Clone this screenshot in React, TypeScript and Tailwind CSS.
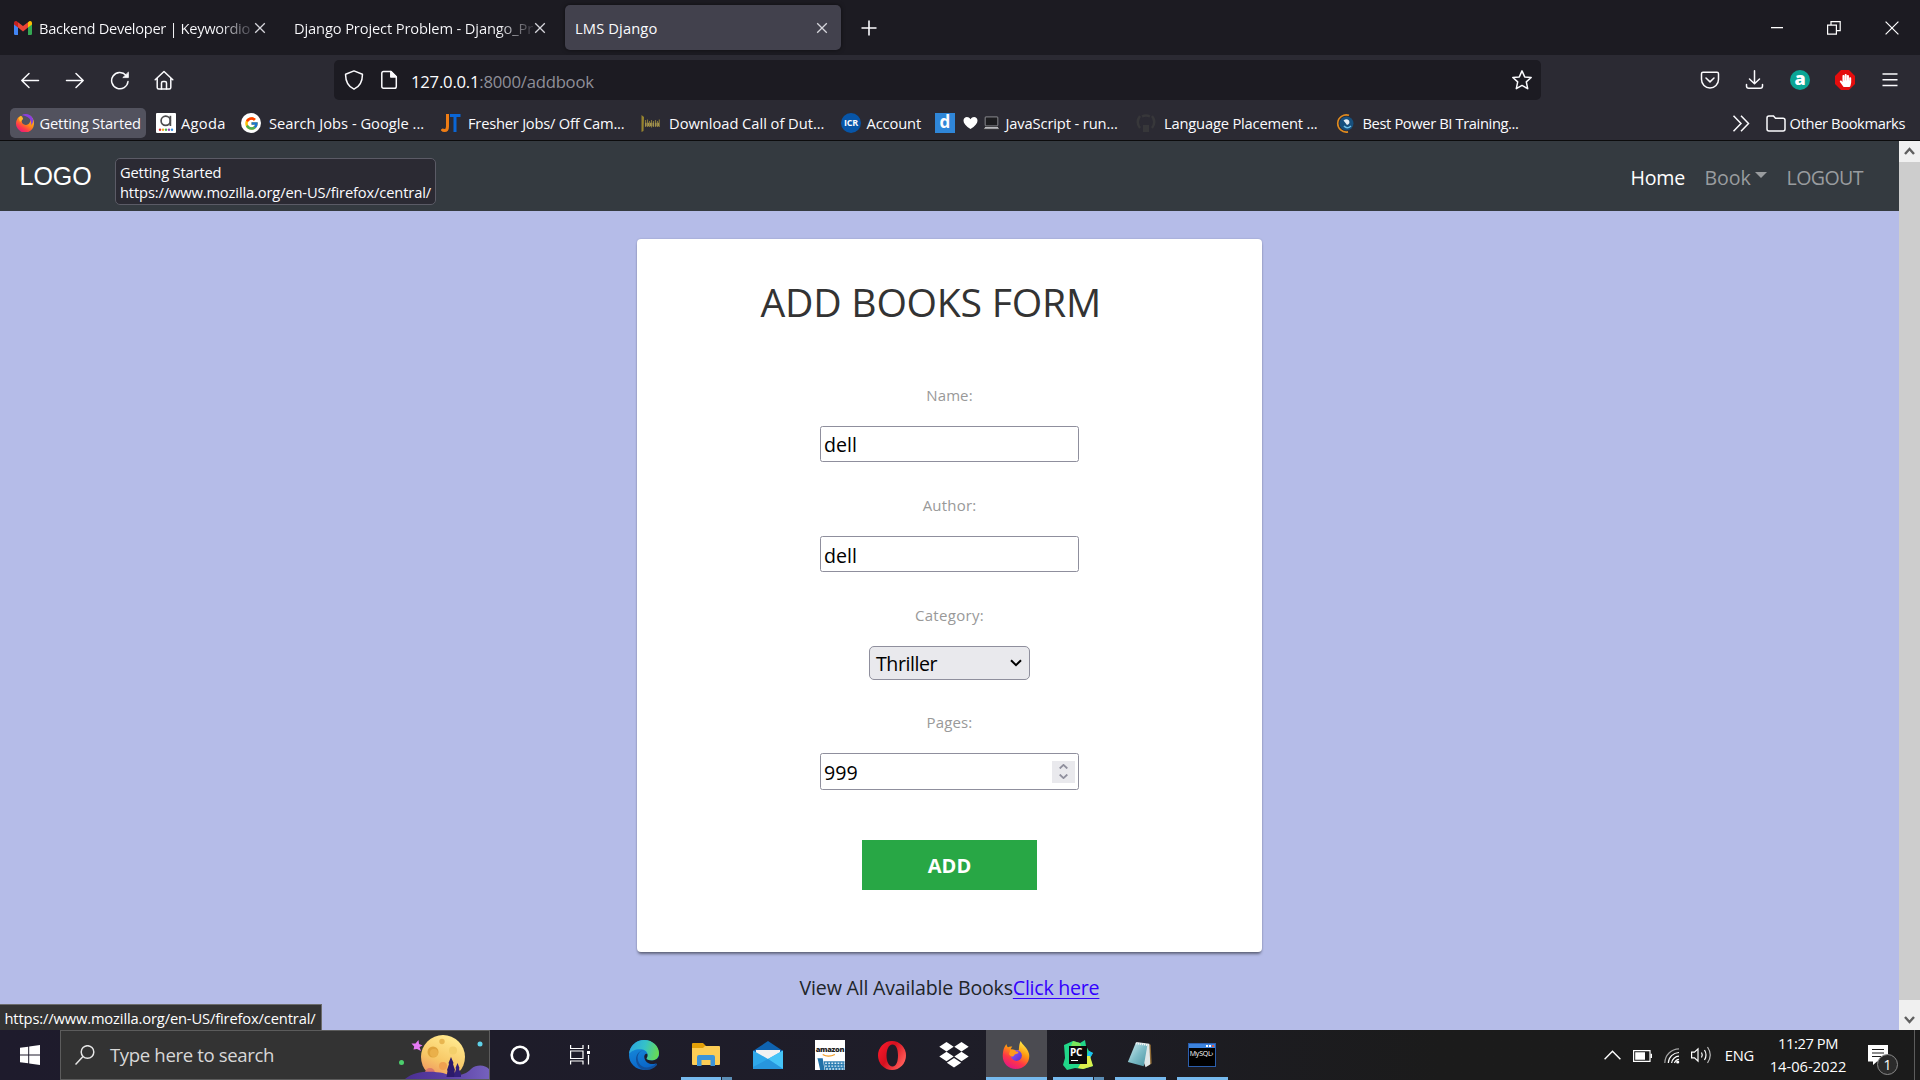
import type { ReactNode } from "react";
import { FcGoogle } from "react-icons/fc";
import { FaHandPaper } from "react-icons/fa";

function CloseIcon() {
  return (
    <svg width="12" height="12" viewBox="0 0 12 12" fill="none" stroke="#d6d6dc" strokeWidth="1.3" className="shrink-0">
      <path d="M1.2 1.2 10.8 10.8M10.8 1.2 1.2 10.8" />
    </svg>
  );
}

function GmailIcon() {
  return (
    <svg width="18" height="14" viewBox="0 0 18 14" className="shrink-0">
      <path d="M0 2.4V12.8Q0 14 1.2 14H4V5Z" fill="#4285f4" />
      <path d="M18 2.4V12.8Q18 14 16.8 14H14V5Z" fill="#34a853" />
      <path d="M4 1.2V6.5L9 10.4 14 6.5V1.2L9 5Z" fill="#ea4335" />
      <path d="M0 2V3.4L4 6.5V1.2L3 .5C1.6-.5 0 .4 0 2Z" fill="#c5221f" />
      <path d="M18 2V3.4L14 6.5V1.2L15 .5C16.4-.5 18 .4 18 2Z" fill="#fbbc04" />
    </svg>
  );
}

function TabBar() {
  return (
    <div className="flex h-[55px] items-center bg-[#1c1b22] text-[14.7px] text-[#fbfbfe]">
      <div className="flex h-[45px] w-[279px] items-center pl-3.5">
        <GmailIcon />
        <span className="ml-[7px] mt-[1.5px] w-[211px] overflow-hidden whitespace-nowrap bg-gradient-to-r from-[#fbfbfe] from-85% to-[#4a4952] bg-clip-text tracking-[-0.34px] text-transparent">
          Backend Developer | Keywordio
        </span>
        <span className="ml-[3.5px]"><CloseIcon /></span>
      </div>
      <div className="flex h-[45px] w-[286px] items-center pl-[15px]">
        <span className="mt-[1.5px] w-[240px] overflow-hidden whitespace-nowrap bg-gradient-to-r from-[#fbfbfe] from-85% to-[#33323a] bg-clip-text tracking-[-0.145px] text-transparent">
          Django Project Problem - Django_Pr
        </span>
        <CloseIcon />
      </div>
      <div className="flex h-[45px] w-[276px] items-center justify-between rounded-[5px] bg-[#42414d] pl-[10px] pr-[13.5px] shadow-[0_0_4px_rgba(0,0,0,0.5)]">
        <span className="mt-[1.5px] tracking-[0.13px]">LMS Django</span>
        <CloseIcon />
      </div>
      <svg width="16" height="16" viewBox="0 0 16 16" className="ml-[19.5px] shrink-0" stroke="#fbfbfe" strokeWidth="1.6">
        <path d="M8 .5v15M.5 8h15" />
      </svg>
      <div className="ml-auto flex items-center pr-[21.5px]">
        <svg width="13" height="13" viewBox="0 0 13 13"><path d="M0 6h12v1.3H0z" fill="#fff" /></svg>
        <svg width="14" height="14" viewBox="0 0 14 14" className="ml-[43px]" fill="none" stroke="#fff" strokeWidth="1.2">
          <path d="M.6 4.2h8.8v9H.6zM4 4V.6h9.2v9H9.6" />
        </svg>
        <svg width="14" height="14" viewBox="0 0 14 14" className="ml-[43.5px]" fill="none" stroke="#fff" strokeWidth="1.2">
          <path d="M.6.6 13.4 13.4M13.4.6.6 13.4" />
        </svg>
      </div>
    </div>
  );
}

function NavIcon({ children, className }: { children: ReactNode; className?: string }) {
  return (
    <svg
      width="20"
      height="20"
      viewBox="0 0 20 20"
      fill="none"
      stroke="#fbfbfe"
      strokeWidth="1.5"
      strokeLinecap="round"
      strokeLinejoin="round"
      className={"shrink-0 " + (className ?? "")}
    >
      {children}
    </svg>
  );
}

function Toolbar() {
  return (
    <div className="flex h-[50px] items-center">
      <div className="flex w-[334px] items-center gap-[25px] pl-5">
        <NavIcon><path d="M18.5 10.5H1.8M9 3.5 1.8 10.5 9 17.5" /></NavIcon>
        <NavIcon><path d="M1.5 10.5H18.2M11 3.5 18.2 10.5 11 17.5" /></NavIcon>
        <NavIcon>
          <path d="M18 11.5A8.2 8.2 0 1 1 16 5.2" />
          <path d="M18.4 2.5V7.6H13.2Z" fill="#fbfbfe" strokeWidth=".8" />
        </NavIcon>
        <NavIcon className="-ml-px">
          <path d="M1.2 9.8 10 1.5l8.8 8.3M3.2 8.5V17.5Q3.2 19 4.7 19H15.3Q16.8 19 16.8 17.5V8.5" />
          <path d="M7.5 19v-6q0-1.500 1.500-1.500h2q1.500 0 1.500 1.500v6" />
        </NavIcon>
      </div>
      <div className="flex h-10 w-[1207px] items-center rounded-[5px] bg-[#1c1b22] pl-2.5">
        <NavIcon>
          <path d="M10 .9 18.4 4.2C18.6 11.5 15.5 16.5 10 19.2 4.5 16.5 1.4 11.5 1.6 4.2Z" />
        </NavIcon>
        <NavIcon className="ml-[15px]">
          <path d="M4.5 1.5H12L17.3 6.8V16.5Q17.3 18.3 15.5 18.3H4.5Q2.8 18.3 2.8 16.5V3.2Q2.8 1.5 4.5 1.5Z" />
          <path d="M11.8 1.5V7H17.3Z" fill="#fbfbfe" />
        </NavIcon>
        <span className="ml-3 mt-[2.5px] text-[16.7px] tracking-[-0.23px] text-[#8f8f98]">
          <span className="text-[#fbfbfe]">127.0.0.1</span>:8000/addbook
        </span>
        <NavIcon className="ml-auto mr-[9px]">
          <path d="M10 .9 12.7 6.9 19.2 7.5 14.3 11.9 15.7 18.7 10 15.4 4.3 18.7 5.7 11.9.8 7.5 7.3 6.9Z" />
        </NavIcon>
      </div>
      <div className="ml-auto flex items-center gap-[25px] pr-5">
        <NavIcon>
          <path d="M3 2.3H17Q18.5 2.3 18.5 3.8V9.5A8.5 8.5 0 0 1 1.5 9.5V3.8Q1.5 2.3 3 2.3Z" />
          <path d="M6 8 10 11.9 14 8" />
        </NavIcon>
        <NavIcon>
          <path d="M9.5.8V13.5M4.5 9 9.5 13.8 14.5 9M1.5 14.5V16Q1.5 18.3 3.8 18.3H15.2Q17.5 18.3 17.5 16V14.5" />
        </NavIcon>
        <div className="flex size-5 items-center justify-center rounded-full bg-[#0aa595]">
          <span className="-mt-1 text-[18px] font-extrabold leading-5 text-white">a</span>
        </div>
        <div className="flex size-5 items-center justify-center bg-[#e40d0d] [clip-path:polygon(30%_0,70%_0,100%_30%,100%_70%,70%_100%,30%_100%,0_70%,0_30%)]">
          <FaHandPaper size={13} color="#fff" />
        </div>
        <NavIcon><path d="M2.5 4H17.5M2.5 9.7H17.5M2.5 15.5H17.5" strokeLinecap="butt" /></NavIcon>
      </div>
    </div>
  );
}

function FirefoxMark({ size, id }: { size: number; id: string }) {
  return (
    <svg width={size} height={size} viewBox="0 0 30 30" className="shrink-0">
      <defs>
        <linearGradient id={id + "a"} x1=".8" y1="0" x2=".3" y2="1">
          <stop offset="0" stopColor="#fff44f" />
          <stop offset=".4" stopColor="#ff980e" />
          <stop offset=".7" stopColor="#ff3647" />
          <stop offset="1" stopColor="#e31587" />
        </linearGradient>
        <linearGradient id={id + "b"} x1="0" y1="0" x2="1" y2="1">
          <stop offset="0" stopColor="#9059ff" />
          <stop offset="1" stopColor="#5b2fc7" />
        </linearGradient>
      </defs>
      <path
        d="M2 8C3 6 4 4 5 3.5 5 5 5.5 6 6.5 6.8 8 6 9.5 5.8 11 6.2 9.8 7.2 9.5 8.3 9.5 9L18 10C18.5 5 18.5 3 20 0 21.5 4 27.5 7 29 14 30.500 22.5 24 30 15 30 6.5 30 .5 23.5 .8 15.5 .9 12.5 1.3 10.2 2 8Z"
        fill={"url(#" + id + "a)"}
      />
      <circle cx="15.5" cy="15.5" r="5.8" fill={"url(#" + id + "b)"} />
      <path d="M9 9.5C12 8.5 14 9.500 15 11.3 17 11.4 17.8 12 17.5 12.8 16.5 14 13.5 13.5 12.5 16 10.5 17.5 8.5 16 7.5 14Z" fill="#ff9b1c" />
    </svg>
  );
}

function FirefoxRing() {
  return (
    <svg width="18" height="18" viewBox="0 0 18 18" className="shrink-0">
      <defs>
        <linearGradient id="ring" x1=".9" y1=".1" x2=".3" y2="1">
          <stop offset="0" stopColor="#ffbd30" />
          <stop offset=".45" stopColor="#ff8a16" />
          <stop offset=".75" stopColor="#ff3b4a" />
          <stop offset="1" stopColor="#e6197f" />
        </linearGradient>
      </defs>
      <path d="M4.5 1.8A9 9 0 1 0 18 9C18 6 16.5 3 14 1.4 15.5 5 14.5 10.5 10 11 6 11.2 4.5 7 7 4.5Z" fill="url(#ring)" />
      <path d="M5.5 1.2C9-.8 15-.3 17 5 17.5 8 16.5 10 15 11 16 6 13 2 5.5 1.2Z" fill="#8a3fe0" />
      <path d="M2.5 4C3.5 2.5 5 2 6 2.2L7 5 4 8Z" fill="#ffb52e" />
    </svg>
  );
}

function AgodaIcon() {
  return (
    <svg width="20" height="20" viewBox="0 0 20 20" className="shrink-0">
      <rect width="20" height="20" rx="1" fill="#fff" />
      <circle cx="9.7" cy="7.8" r="4.6" fill="none" stroke="#4d4d4f" strokeWidth="1.7" />
      <path d="M14.4 2.8V13" stroke="#4d4d4f" strokeWidth="1.7" />
      <circle cx="4" cy="16.8" r="1.2" fill="#e12d2d" />
      <circle cx="7" cy="16.8" r="1.2" fill="#f5a623" />
      <circle cx="10" cy="16.8" r="1.2" fill="#4fb548" />
      <circle cx="13" cy="16.8" r="1.2" fill="#9a3fb5" />
      <circle cx="16" cy="16.8" r="1.2" fill="#2f8fe0" />
    </svg>
  );
}

function JtIcon() {
  return (
    <svg width="20" height="20" viewBox="0 0 20 20" fill="none" className="shrink-0">
      <path d="M6.5 1V13.5Q6.5 17.5 3.5 17.5 1.8 17.5.8 16" stroke="#ef7d14" strokeWidth="3" />
      <path d="M9 2.5H19.5M14 2V19" stroke="#0a66d6" strokeWidth="3" />
    </svg>
  );
}

function GameIcon() {
  return (
    <svg width="19" height="20" viewBox="0 0 19 20" className="shrink-0">
      <path d="M.5 2 3 4 2.5 18 .5 19Z" fill="#97842f" />
      <path d="M4.5 7V14M6.500 6.5V14M8.500 8V14M10.500 7V14.5M12.500 8V14M14.500 7V14M16.500 8V14M18.300 6.5V14" stroke="#85763a" strokeWidth="1.1" />
      <path d="M4 11.5H18" stroke="#a39350" strokeWidth="3.500" strokeDasharray="1.600 .9" />
    </svg>
  );
}

function LaptopIcon() {
  return (
    <svg width="17" height="14" viewBox="0 0 17 14" className="shrink-0">
      <rect x="2.2" y=".8" width="12.6" height="9" rx="1" fill="#1d1d20" stroke="#77777c" strokeWidth="1.2" />
      <path d="M.3 13.2 2.2 10.4H14.8L16.7 13.2Z" fill="#b9b9bd" stroke="#111" strokeWidth=".6" />
    </svg>
  );
}

function GlobeIcon() {
  return (
    <svg width="19" height="19" viewBox="0 0 19 19" fill="none" className="shrink-0">
      <circle cx="10.5" cy="9.5" r="7" fill="#17507e" />
      <path d="M7.5 6.5Q10.5 4 13 6.5 14.5 9.500 11 11L9.500 9Z" fill="#e6eef5" />
      <path d="M8 12Q11 15.5 15 12" stroke="#6fc0ea" strokeWidth="1.5" />
      <path d="M13 1.3A8.6 8.6 0 1 0 12 17.9" stroke="#e08a1e" strokeWidth="1.6" />
    </svg>
  );
}

function BookmarksBar() {
  return (
    <div className="flex h-[35px] items-start whitespace-nowrap pl-2.5 pt-[3px] text-[14.7px] text-[#fbfbfe]">
      <div className="mr-2.5 flex h-[30px] w-[136px] items-center rounded-[5px] bg-[#52525e] pl-1.5">
        <FirefoxRing />
        <span className="ml-[5.5px] tracking-[-0.16px]">Getting Started</span>
      </div>
      <div className="flex h-[30px] w-[85px] items-center">
        <AgodaIcon />
        <span className="ml-[5px] tracking-[0.3px]">Agoda</span>
      </div>
      <div className="flex h-[30px] w-[200px] items-center">
        <span className="flex size-5 items-center justify-center rounded-full bg-white"><FcGoogle size={15} /></span>
        <span className="ml-[8px]">Search Jobs - Google ...</span>
      </div>
      <div className="flex h-[30px] w-[200px] items-center">
        <JtIcon />
        <span className="ml-[7px] tracking-[-0.22px]">Fresher Jobs/ Off Cam...</span>
      </div>
      <div className="flex h-[30px] w-[200px] items-center">
        <GameIcon />
        <span className="ml-[9px] tracking-[-0.03px]">Download Call of Dut...</span>
      </div>
      <div className="flex h-[30px] w-[94px] items-center">
        <span className="flex size-5 items-center justify-center rounded-full bg-[#0755a8] text-[9px] font-bold tracking-[-0.2px]">ICR</span>
        <span className="ml-[5.5px] tracking-[-0.13px]">Account</span>
      </div>
      <div className="flex h-[30px] w-[201px] items-center">
        <span className="flex size-5 items-center justify-center bg-[#2f86d8] pb-0.5 text-[17px] font-bold leading-5">d</span>
        <svg width="15" height="12" viewBox="0 0 15 12" className="ml-[7.5px]"><path d="M7.5 12C3 9 .5 6.5.5 3.7.5-.3 5.5-1.2 7.5 2.3 9.5-1.2 14.5-.3 14.5 3.7 14.5 6.5 12 9 7.5 12Z" fill="#fff" /></svg>
        <span className="ml-[5px]"><LaptopIcon /></span>
        <span className="ml-[6px] tracking-[-0.13px]">JavaScript - run...</span>
      </div>
      <div className="flex h-[30px] w-[200px] items-center">
        <svg width="20" height="19" viewBox="0 0 20 19" fill="none" stroke="#37373a" strokeWidth="2.5">
          <path d="M4 2Q-.5 8 4 14M16 2Q20.5 8 16 14M6 2.500Q10 .5 14 2.500" />
          <path d="M7 11H13V18H7Z" fill="#37373a" stroke="none" />
        </svg>
        <span className="ml-[8px] tracking-[-0.18px]">Language Placement ...</span>
      </div>
      <div className="flex h-[30px] items-center">
        <GlobeIcon />
        <span className="ml-[7.5px] tracking-[-0.38px]">Best Power BI Training...</span>
      </div>
      <div className="ml-auto flex h-[30px] items-center pr-[15px]">
        <svg width="18" height="17" viewBox="0 0 18 17" fill="none" stroke="#fbfbfe" strokeWidth="1.5">
          <path d="M1.5.8 9 8.5 1.5 16.2M9 .8 16.5 8.5 9 16.2" />
        </svg>
        <svg width="20" height="17" viewBox="0 0 20 17" className="ml-4" fill="none" stroke="#fbfbfe" strokeWidth="1.5">
          <path d="M3 1H7.5L9.5 3.2H17Q19 3.2 19 5.2V14Q19 16 17 16H3Q1 16 1 14V3Q1 1 3 1Z" />
        </svg>
        <span className="ml-[4px] tracking-[-0.38px]">Other Bookmarks</span>
      </div>
    </div>
  );
}

function SiteNav() {
  return (
    <nav className="relative flex h-[70px] items-center bg-[#343a40] pl-[19.5px] text-[19.6px]">
      <span className="mt-[2px] font-['Liberation_Sans'] text-[25px] text-white">LOGO</span>
      <div className="ml-auto mt-[3px] flex items-center pr-[36px] text-[#999c9f]">
        <span className="w-[74px] tracking-[-0.25px] text-white">Home</span>
        <span className="flex w-[82px] items-center">
          <span className="tracking-[-0.13px]">Book</span>
          <svg width="12" height="6" viewBox="0 0 12 6" className="-mt-1 ml-[4px]"><path d="M0 0H12L6 6Z" fill="#999c9f" /></svg>
        </span>
        <span className="tracking-[-0.6px]">LOGOUT</span>
      </div>
      <div className="absolute left-[115px] top-[17px] h-[47px] w-[321px] whitespace-nowrap rounded-[5px] border border-[#5b5b66] bg-[#2b2a33] pl-[4px] pt-[2.5px] text-[14.7px] leading-5 text-[#fbfbfe]">
        <div className="tracking-[-0.16px]">Getting Started</div>
        <div className="tracking-[-0.14px]">https://www.mozilla.org/en-US/firefox/central/</div>
      </div>
    </nav>
  );
}

function BookForm() {
  return (
    <form className="flex h-[713px] w-[625px] flex-col items-center rounded-[4px] bg-white pt-[39px] text-[19.6px] text-black shadow-[0_3px_3px_-1px_rgba(0,0,0,0.45),0_0_2px_rgba(0,0,0,0.2)]">
      <h1 className="h-12 self-start pl-[123.5px] text-[39.2px] leading-[48px] tracking-[-0.25px] text-[#333]">ADD BOOKS FORM</h1>
      <label className="mt-[57px] h-6 text-[15px] leading-6 tracking-[0.1px] text-[#999]">Name:</label>
      <input defaultValue="dell" className="mt-[19px] h-9 w-[259px] rounded-[2.5px] border border-[#8f8f9d] bg-white pl-[3px] pt-px" />
      <label className="mt-[31px] h-6 text-[15px] leading-6 tracking-[0.2px] text-[#999]">Author:</label>
      <input defaultValue="dell" className="mt-[19px] h-9 w-[259px] rounded-[2.5px] border border-[#8f8f9d] bg-white pl-[3px] pt-[2px]" />
      <label className="mt-[31px] h-6 text-[15px] leading-6 tracking-[0.3px] text-[#999]">Category:</label>
      <div className="mt-[19px] flex h-[34px] w-[161px] items-center justify-between rounded-[5px] border border-[#8f8f9d] bg-[#e9e9ed] pl-[6px] pr-[7px]">
        <span className="mt-[2px] tracking-[-0.45px]">Thriller</span>
        <svg width="12" height="8" viewBox="0 0 12 8" fill="none" stroke="#000" strokeWidth="2"><path d="M1 1.2 6 6.2 11 1.2" /></svg>
      </div>
      <label className="mt-[30px] h-6 text-[15px] leading-6 tracking-[0.15px] text-[#999]">Pages:</label>
      <div className="mt-[19px] flex h-[37px] w-[259px] items-center justify-between rounded-[2.5px] border border-[#8f8f9d] bg-white pl-[3px] pr-[3px]">
        <span className="mt-[2px]">999</span>
        <span className="flex h-[22px] w-[23px] flex-col items-center justify-center gap-[5px] bg-[#e9e9ed]">
          <svg width="9" height="5" viewBox="0 0 9 5" fill="none" stroke="#8f8f9d" strokeWidth="1.8"><path d="M.7 4.5 4.5.9 8.3 4.5" /></svg>
          <svg width="9" height="5" viewBox="0 0 9 5" fill="none" stroke="#8f8f9d" strokeWidth="1.8"><path d="M.7.5 4.5 4.1 8.3.5" /></svg>
        </span>
      </div>
      <button type="button" className="mt-[50px] h-[50px] w-[175px] bg-[#28a745] pt-[2px] text-[20px] font-bold text-white">ADD</button>
    </form>
  );
}

function Scrollbar() {
  return (
    <div className="flex h-[889px] w-[21px] flex-col bg-[#cdcdcd]">
      <div className="flex h-[21px] items-center justify-center bg-[#f0f0f0] pb-px">
        <svg width="11" height="8" viewBox="0 0 11 8" fill="none" stroke="#606060" strokeWidth="2.4"><path d="M1 7 5.5 2 10 7" /></svg>
      </div>
      <div className="mt-auto flex h-[30px] items-end justify-center bg-[#f0f0f0] pb-[6px]">
        <svg width="11" height="8" viewBox="0 0 11 8" fill="none" stroke="#606060" strokeWidth="2.4"><path d="M1 1 5.5 6 10 1" /></svg>
      </div>
    </div>
  );
}

function MoonArt() {
  return (
    <svg width="94" height="48" viewBox="0 0 94 48" className="ml-auto shrink-0">
      <defs>
        <linearGradient id="moon" x1=".7" y1=".1" x2=".3" y2="1">
          <stop offset="0" stopColor="#ffe68a" />
          <stop offset=".55" stopColor="#f7c766" />
          <stop offset="1" stopColor="#ef9160" />
        </linearGradient>
        <linearGradient id="hill" x1="0" y1="0" x2="1" y2="0">
          <stop offset="0" stopColor="#4b2f92" />
          <stop offset=".5" stopColor="#5a3fa4" />
          <stop offset="1" stopColor="#7561bd" />
        </linearGradient>
      </defs>
      <circle cx="48" cy="26" r="22" fill="url(#moon)" />
      <circle cx="38" cy="21" r="5.5" fill="#dfa33c" />
      <circle cx="39" cy="22" r="4" fill="#eab04a" />
      <circle cx="58" cy="19.5" r="4" fill="#f3cf6b" />
      <circle cx="47" cy="10.5" r="2.7" fill="#e8b650" />
      <circle cx="48" cy="35" r="4" fill="#f0a050" />
      <circle cx="35" cy="42" r="5" fill="#d9776a" />
      <path d="M10 48C20 39 38 40 48 42 58 46 70 45 76 38 82 33 90 34 94 38V48Z" fill="url(#hill)" />
      <path d="M56 26 58.5 32 58 33 60 39 59.5 40 60.5 46H51.5L52.5 40 52 39 54 33 53.5 32Z" fill="#2c1a6b" />
      <path d="M62.5 32 64.5 37 64 38 66 43 66 46H59L59.5 43 61 38 60.5 37Z" fill="#33207a" />
      <path d="M23.500 9 24 13 27.5 14.500 24.5 16 26 20 22 18 18.5 18.500 19.2 15.500 16.5 12.500 20.5 12.5Z" fill="#e77bf5" />
      <circle cx="6.5" cy="31.5" r="2.5" fill="#4ccf6d" />
      <circle cx="85" cy="13" r="2.5" fill="#5fd3ea" />
    </svg>
  );
}

function TaskCell({ children, bar, active }: { children: ReactNode; bar?: "single" | "stack"; active?: boolean }) {
  return (
    <div className="flex h-[50px] w-[62px] flex-col items-center">
      <div className={active ? "flex h-[47px] w-[61px] items-center justify-center bg-[#4b4b51] pt-[3px]" : "flex h-[47px] w-[61px] items-center justify-center pt-[3px]"}>
        {children}
      </div>
      {bar === "single" && <div className={active ? "h-[3px] w-[61px] bg-[#76b9ed]" : "h-[3px] w-[51px] bg-[#76b9ed]"} />}
      {bar === "stack" && (
        <div className="flex h-[3px] w-[51px]">
          <div className="w-10 bg-[#76b9ed]" />
          <div className="ml-px w-2.5 bg-[#5b8db5]" />
        </div>
      )}
    </div>
  );
}

function EdgeIcon() {
  return (
    <svg width="30" height="30" viewBox="0 0 30 30">
      <defs>
        <linearGradient id="edgeTop" x1="0" y1=".3" x2="1" y2=".5">
          <stop offset="0" stopColor="#2aa5e0" />
          <stop offset=".5" stopColor="#35c1c9" />
          <stop offset="1" stopColor="#68dc52" />
        </linearGradient>
        <linearGradient id="edgeLow" x1="0" y1="0" x2=".3" y2="1">
          <stop offset="0" stopColor="#1a93df" />
          <stop offset="1" stopColor="#0a66c8" />
        </linearGradient>
      </defs>
      <circle cx="15" cy="15" r="15" fill="url(#edgeLow)" />
      <path d="M15 10C9 11 7 18 10 23 13 28.5 20 29 27 24 28 23.5 28.5 24.5 27.5 25.5 22 31.5 14 31 10 27 5 21 6 12 15 10Z" fill="#12519c" />
      <path d="M0 14C1 5 8 0 15 0 24 0 30 6.5 30 13 30 18 26.5 20.5 22.5 20.5 19 20.5 17 19.3 17.5 18.2 19.5 16 19 10 12.5 9.3 7 8.7 2 11 0 14Z" fill="url(#edgeTop)" />
      <path d="M30 16C28.5 19.5 25.5 20.5 22.5 20.5 19 20.5 17 19.3 17.5 18.2 18.5 17 18.8 15.5 18.2 13.8 14 13 14 21 20 23.5 23 24.5 26 24 28 23L31 27V16Z" fill="#1e1d2a" />
    </svg>
  );
}

function FolderIcon() {
  return (
    <svg width="28" height="24" viewBox="0 0 28 24">
      <path d="M0 1Q0 0 1 0H11L13.5 2.5V6H0Z" fill="#e3a008" />
      <path d="M0 5H11L13 3H27Q28 3 28 4V21Q28 22 27 22H1Q0 22 0 21Z" fill="#fccd55" />
      <path d="M5 23V14Q5 12 7 12H21Q23 12 23 14V23H18.5V17H9.5V23Z" fill="#3c94d8" />
    </svg>
  );
}

function MailIcon() {
  return (
    <svg width="30" height="28" viewBox="0 0 30 28">
      <path d="M0 10 15 0 30 10V14H0Z" fill="#0f63b0" />
      <path d="M3 9H27V14L15 20 3 14Z" fill="#f2f2f2" />
      <path d="M0 9.5 15 18 30 9.5V28H0Z" fill="#2fa8ea" />
      <path d="M15 18 30 9.5V28Z" fill="#45c4f7" />
      <path d="M15 18 30 28H0V26Z" fill="#2796dd" />
    </svg>
  );
}

function AmazonIcon() {
  return (
    <div className="flex size-[30px] flex-col overflow-hidden bg-white">
      <span className="mt-[4.5px] text-center font-['Open_Sans'] text-[7.5px] font-extrabold leading-[9px] tracking-[-0.3px] text-[#222]">amazon</span>
      <svg width="30" height="17" viewBox="0 0 30 17">
        <path d="M7.5.5Q13 4 20 .6" stroke="#f39a1e" strokeWidth="1.2" fill="none" />
        <path d="M2 4.5H7.5L9.5 17H5L2.5 6Z" fill="#2272a8" />
        <path d="M8.5 7.5H30V17H10Z" fill="#2e7fb3" />
        <path d="M10 9.5H30M10 12.5H30M11 15.5H30" stroke="#d8eaf5" strokeWidth="1.4" strokeDasharray="1.8 1.4" />
      </svg>
    </div>
  );
}

function OperaIcon() {
  return (
    <svg width="28" height="29" viewBox="0 0 28 29">
      <defs>
        <linearGradient id="opera" x1="0" y1="0" x2="1" y2=".6">
          <stop offset="0" stopColor="#ff1b2d" />
          <stop offset=".5" stopColor="#d4101f" />
          <stop offset="1" stopColor="#ff5a57" />
        </linearGradient>
      </defs>
      <path fillRule="evenodd" d="M14 0A14 14.5 0 1 1 14 29 14 14.5 0 1 1 14 0ZM14.5 3.5C10.5 3.5 8.5 9 8.5 14.5S10.5 25.5 14.5 25.5 20 20 20 14.5 18.5 3.5 14.5 3.5Z" fill="url(#opera)" />
    </svg>
  );
}

function DropboxIcon() {
  return (
    <svg width="30" height="26" viewBox="0 0 30 26" fill="#fff">
      <path d="M7.5 0 14.7 4.7 7.5 9.4.3 4.7ZM22.5 0 29.7 4.7 22.5 9.4 15.3 4.7ZM7.5 9.8 14.7 14.5 7.5 19.2.3 14.5ZM22.5 9.8 29.7 14.5 22.5 19.2 15.3 14.5ZM15 16 22.2 20.7 15 25.4 7.8 20.7Z" />
    </svg>
  );
}

function PyCharmIcon() {
  return (
    <div className="relative size-[30px]">
      <svg width="30" height="30" viewBox="0 0 30 30">
        <path d="M1 5 10 1 17 3 22 0 23 6 26 11 30 13 27 18 30 26 20 29 12 28 4 30 0 25 2 18Z" fill="#21d789" />
        <path d="M26 11 30 13 27 18 24 16Z" fill="#1bc0f5" />
        <path d="M22 16H27L30 26 20 29 15 28Z" fill="#dcf04c" />
        <path d="M10 1 17 3 18 6H8Z" fill="#7be65a" />
      </svg>
      <div className="absolute left-[6px] top-[6px] h-[18px] w-[18px] bg-[#0b0b0b] pl-px font-['Open_Sans'] text-[10px] font-bold leading-[12px] tracking-[-0.2px] text-white">
        PC
        <div className="ml-px mt-[2px] h-px w-[7px] bg-white" />
      </div>
    </div>
  );
}

function NotepadIcon() {
  return (
    <svg width="28" height="28" viewBox="0 0 28 30">
      <defs>
        <linearGradient id="pad" x1="0" y1="0" x2="1" y2="1">
          <stop offset="0" stopColor="#d5eff2" />
          <stop offset=".5" stopColor="#7fbdc8" />
          <stop offset="1" stopColor="#4b94a3" />
        </linearGradient>
      </defs>
      <path d="M22 3 25.5 4 26.5 24 22 27Z" fill="#8f6a34" />
      <path d="M10 1 24 3 25 25 20 28Z" fill="#dfe7e8" />
      <path d="M9.5 2 22 4 18 27 1 22.5Z" fill="url(#pad)" />
      <path d="M9.5 2.5 23 4.5" stroke="#f5f5f5" strokeWidth="2" strokeDasharray="1.2 1" />
    </svg>
  );
}

function MySqlIcon() {
  return (
    <div className="-ml-px flex h-[24px] w-[28px] flex-col border border-[#2b5fae] bg-black">
      <div className="flex h-[4px] shrink-0 items-center justify-end gap-px bg-[#3c83dd] pr-px">
        <span className="size-[2px] bg-white" />
        <span className="size-[2px] bg-white" />
        <span className="size-[2px] bg-[#e2583e]" />
      </div>
      <span className="mt-px whitespace-nowrap text-center font-['Open_Sans'] text-[7px] leading-[9px] tracking-[-0.25px] text-white">MySQL›</span>
    </div>
  );
}

function Taskbar() {
  return (
    <div className="flex h-[50px] items-center bg-gradient-to-r from-[#1e1b2c] via-[#1e1d28] via-50% to-[#1b1b1b] to-75% text-[14.7px] text-white">
      <div className="flex w-[60px] justify-center">
        <svg width="20" height="20" viewBox="0 0 20 20" fill="#fff">
          <path d="M0 2.8 8.2 1.7V9.5H0ZM9.2 1.5 20 0V9.5H9.2ZM0 10.5H8.2V18.3L0 17.2ZM9.2 10.5H20V20L9.2 18.5Z" />
        </svg>
      </div>
      <div className="flex h-[50px] w-[430px] items-center border border-[#5c5c5c] bg-[#333] pl-[14px]">
        <svg width="20" height="20" viewBox="0 0 20 20" fill="none" stroke="#e6e6e6" strokeWidth="1.5">
          <circle cx="12.5" cy="7" r="6.3" />
          <path d="M8 11.5.5 19.5" />
        </svg>
        <span className="ml-[15px] text-[18.6px] tracking-[-0.37px] text-[#d8d8d8]">Type here to search</span>
        <MoonArt />
      </div>
      <svg width="20" height="20" viewBox="0 0 20 20" className="ml-5"><circle cx="10" cy="10" r="8.3" fill="none" stroke="#fff" strokeWidth="2.6" /></svg>
      <svg width="21" height="20" viewBox="0 0 21 20" className="ml-10" fill="none" stroke="#fff" strokeWidth="1.2">
        <path d="M.6 0V3.5H13V0M.6 6H13V13.5H.6ZM.6 19.5V16H13V19.5M18.5 0V4M18.5 10V19.5" />
        <path d="M17 6h3v3h-3z" fill="#fff" stroke="none" />
      </svg>
      <div className="ml-[22px] flex">
        <TaskCell><EdgeIcon /></TaskCell>
        <TaskCell bar="stack"><FolderIcon /></TaskCell>
        <TaskCell><MailIcon /></TaskCell>
        <TaskCell><AmazonIcon /></TaskCell>
        <TaskCell><OperaIcon /></TaskCell>
        <TaskCell><DropboxIcon /></TaskCell>
        <TaskCell bar="single" active><FirefoxMark size={28} id="ff" /></TaskCell>
        <TaskCell bar="stack"><PyCharmIcon /></TaskCell>
        <TaskCell bar="single"><NotepadIcon /></TaskCell>
        <TaskCell bar="single"><MySqlIcon /></TaskCell>
      </div>
      <div className="ml-auto flex h-[50px] items-center">
        <svg width="17" height="10" viewBox="0 0 17 10" fill="none" stroke="#fff" strokeWidth="1.4"><path d="M.6 9.2 8.5 1.3 16.4 9.2" /></svg>
        <svg width="19" height="12" viewBox="0 0 19 12" className="ml-3 mt-[1px]">
          <path d="M.6.6H17V11.4H.6Z" fill="none" stroke="#fff" strokeWidth="1.2" />
          <path d="M2.2 2.3H12V9.7H2.2ZM17.5 3.8H19V8H17.5Z" fill="#fff" />
        </svg>
        <svg width="16" height="16" viewBox="0 0 16 16" className="ml-3 mt-[2px]" fill="none" stroke="#fff" strokeWidth="1.2">
          <path d="M.8 15A14.5 14.5 0 0 1 15 .8" opacity=".6" />
          <path d="M4.3 15A11 11 0 0 1 15 4.5M7.6 15A7.6 7.6 0 0 1 15 8.2M10.5 15A5 5 0 0 1 15 11.3" />
          <circle cx="13.7" cy="14" r="1.6" fill="#fff" stroke="none" />
        </svg>
        <svg width="21" height="18" viewBox="0 0 21 18" className="ml-[11px]" fill="none" stroke="#fff" strokeWidth="1.2">
          <path d="M.6 6.2H3.5L7 2.8V15.2L3.5 11.8H.6Z" />
          <path d="M10.5 6.5Q12 9 10.5 11.5" />
          <path d="M13.5 4Q16.5 9 13.5 14" />
          <path d="M16.5 1Q22 9 16.5 17" opacity=".7" />
        </svg>
        <span className="ml-[12.5px] tracking-[-0.2px]">ENG</span>
        <div className="ml-[14px] -mt-[1px] flex w-[80px] flex-col items-center leading-[23px]">
          <span className="tracking-[-0.4px]">11:27 PM</span>
          <span>14-06-2022</span>
        </div>
        <div className="relative ml-[20px] mr-[25.5px] h-5 w-5">
          <svg width="20" height="20" viewBox="0 0 20 20">
            <path d="M0 0H20V16.5H9L5 20V16.5H0Z" fill="#fff" />
            <path d="M4 4.5H16M4 8H16M4 11.5H13" stroke="#1b1b1b" strokeWidth="1.2" />
          </svg>
          <span className="absolute left-[9px] top-[9px] flex size-[21px] items-center justify-center rounded-full border border-[#8a8a8a] bg-[#2b2b2b] text-[14px] leading-none">1</span>
        </div>
        <div className="mr-[5.5px] h-[50px] w-px bg-[#5c5c5c]" />
      </div>
    </div>
  );
}

export default function App() {
  return (
    <div className="flex h-[1080px] w-[1920px] flex-col overflow-hidden font-['Open_Sans',sans-serif]">
      <header>
        <TabBar />
        <div className="h-[86px] border-b border-[#0c0c0d] bg-[#2b2a33]">
          <Toolbar />
          <BookmarksBar />
        </div>
      </header>
      <div className="relative flex h-[889px]">
        <main className="flex w-[1899px] flex-col bg-[#b5bce8]">
          <SiteNav />
          <div className="flex flex-col items-center pt-7">
            <BookForm />
            <p className="mt-[21px] text-[19.6px] leading-[30px] tracking-[-0.2px] text-[#212529]">
              View All Available Books<a className="tracking-[-0.25px] text-[#3300ff] underline underline-offset-[3px]">Click here</a>
            </p>
          </div>
        </main>
        <Scrollbar />
        <div className="absolute bottom-0 left-0 h-[26px] w-[322px] whitespace-nowrap border-r border-t border-[#6b6b6b] bg-[#333] pl-[4.5px] text-[14.7px] leading-[26px] tracking-[-0.14px] text-white">
          https://www.mozilla.org/en-US/firefox/central/
        </div>
      </div>
      <Taskbar />
    </div>
  );
}
